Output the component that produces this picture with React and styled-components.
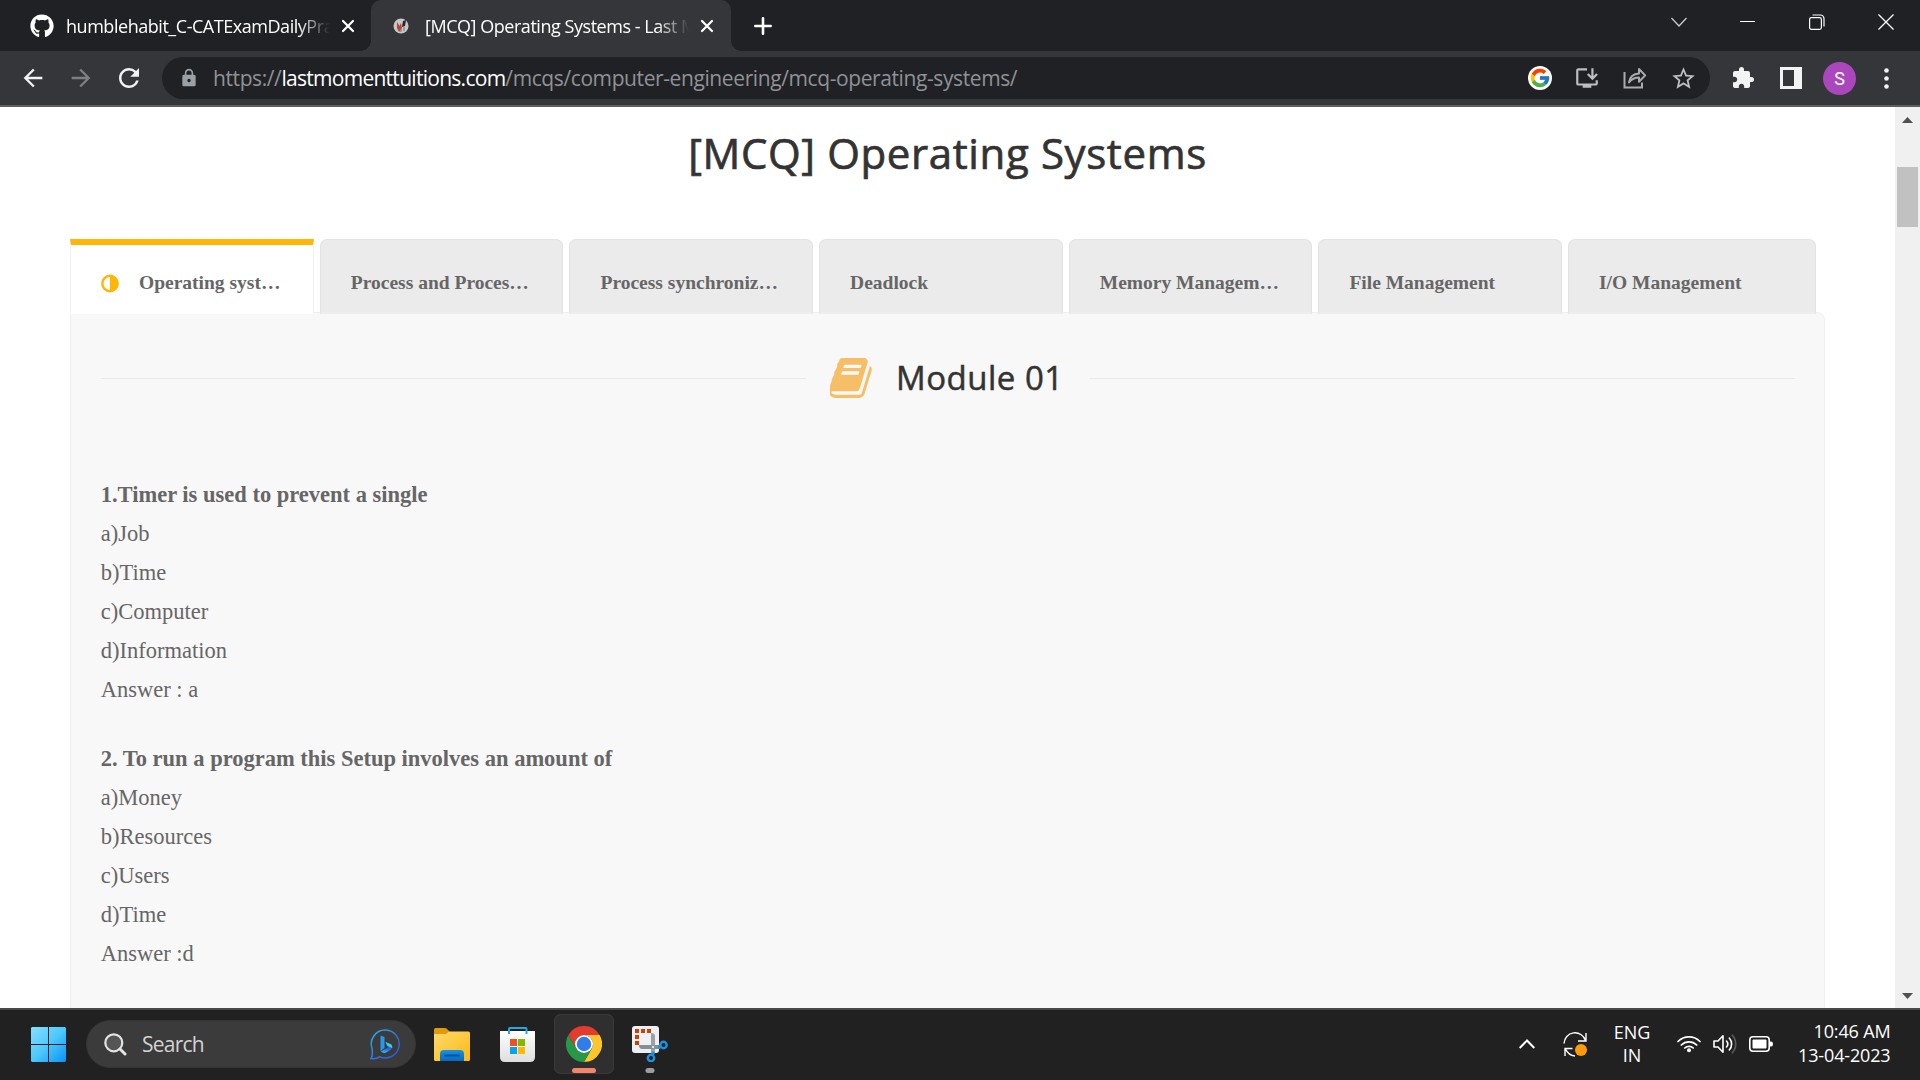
import React from "react";
import styled, { createGlobalStyle, css } from "styled-components";
import { FaGithub } from "react-icons/fa";
import { FcGoogle } from "react-icons/fc";
import { MdExtension, MdLock, MdStarBorder, MdInstallDesktop, MdRefresh, MdArrowBack, MdArrowForward } from "react-icons/md";

const UI = `"Open Sans", "Noto Sans", sans-serif`;
const SERIF = `"Liberation Serif", "Times New Roman", serif`;

const Global = createGlobalStyle`
  * { box-sizing: border-box; }
  html, body { margin: 0; padding: 0; overflow: hidden; }
  svg { display: block; flex: none; }
`;

const Screen = styled.div`
  width: 1920px;
  height: 1080px;
  display: flex;
  flex-direction: column;
  background: #fff;
  overflow: hidden;
`;

/* ---------- browser chrome ---------- */

const TabStrip = styled.header`
  height: 51px;
  flex: none;
  display: flex;
  background: #202124;
  color: #fff;
  font-family: ${UI};
`;

const BrowserTab = styled.div`
  position: relative;
  width: ${(p) => p.$width}px;
  padding-left: ${(p) => p.$pad}px;
  display: flex;
  align-items: center;
  ${(p) =>
    p.$active &&
    css`
      background: #35363a;
      border-radius: 10px 10px 0 0;
      &::before,
      &::after {
        content: "";
        position: absolute;
        bottom: 0;
        width: 10px;
        height: 10px;
      }
      &::before {
        left: -10px;
        background: radial-gradient(circle at 0 0, transparent 9.5px, #35363a 10px);
      }
      &::after {
        right: -10px;
        background: radial-gradient(circle at 100% 0, transparent 9.5px, #35363a 10px);
      }
    `}
`;

const TabTitle = styled.span`
  width: 264px;
  margin: 0 10.5px 0 ${(p) => p.$gap}px;
  font-size: 18px;
  line-height: 24px;
  letter-spacing: -0.46px;
  white-space: nowrap;
  mask-image: linear-gradient(to right, #000 232px, transparent 264px);
`;

const NewTab = styled.div`
  width: 64px;
  display: flex;
  align-items: center;
  justify-content: center;
`;

const WindowControls = styled.div`
  margin-left: auto;
  height: 43px;
  display: flex;
  align-items: center;
  gap: 53px;
  padding-right: 26px;
`;

const Toolbar = styled.div`
  height: 56px;
  flex: none;
  display: flex;
  align-items: center;
  background: #35363a;
  border-bottom: 2px solid #5b5d61;
  color: #f1f3f4;
`;

const NavButtons = styled.div`
  width: 162px;
  display: flex;
  align-items: center;
  padding-left: 19px;
  gap: 19.5px;
`;

const Omnibox = styled.div`
  width: 1548px;
  height: 42px;
  border-radius: 21px;
  background: #202124;
  display: flex;
  align-items: center;
  padding: 0 13px 0 17px;
  color: #9aa0a6;
`;

const Url = styled.span`
  margin-left: 14px;
  font-family: ${UI};
  font-size: 21px;
  line-height: 30px;
  letter-spacing: -0.4px;
  color: #8f9296;
  white-space: nowrap;
`;

const Host = styled.span`
  color: #fff;
  letter-spacing: -0.72px;
`;

const OmniActions = styled.div`
  margin-left: auto;
  display: flex;
  align-items: center;
  gap: 22.8px;
  color: #bdbec1;
`;

const GoogleBadge = styled.span`
  width: 24px;
  height: 24px;
  border-radius: 50%;
  background: #fff;
  display: flex;
  align-items: center;
  justify-content: center;
`;

const ToolbarActions = styled.div`
  flex: 1;
  display: flex;
  align-items: center;
  padding-left: 21px;
`;

const Avatar = styled.span`
  width: 33px;
  height: 33px;
  margin: 0 28px 0 21px;
  border-radius: 50%;
  background: #ab47bc;
  color: #fff;
  display: flex;
  align-items: center;
  justify-content: center;
  font: 400 18px/33px Roboto, sans-serif;
`;

const Side = styled.span`
  margin-left: 25px;
`;

/* ---------- page ---------- */

const Viewport = styled.main`
  height: 901px;
  flex: none;
  display: flex;
  overflow: hidden;
`;

const Page = styled.div`
  width: 1895px;
  padding: 0 70px;
`;

const Title = styled.h1`
  margin: 0;
  height: 132px;
  padding-top: 17px;
  text-align: center;
  font: 400 42px/57px "Open Sans", sans-serif;
  letter-spacing: 0.62px;
  -webkit-text-stroke: 0.7px #333;
  color: #333;
`;

const TabList = styled.nav`
  display: grid;
  grid-template-columns: repeat(6, 243.65px) 248px;
  column-gap: 6px;
  height: 75px;
  position: relative;
  z-index: 1;
`;

const PageTab = styled.div`
  display: flex;
  align-items: center;
  padding: 14px 0 0 30.2px;
  border: 1px solid #e3e3e3;
  border-bottom: 2px solid #ededed;
  border-radius: 7px 7px 0 0;
  background: #ebebeb;
  color: #666;
  font: 700 19.5px/24px ${SERIF};
  white-space: nowrap;
  ${(p) =>
    p.$active &&
    css`
      background: #fff;
      border-color: #f0f0f0;
      border-top: 6px solid #ffb606;
      border-bottom-color: #fff;
      border-radius: 0;
      padding: 9px 0 0 29.5px;
      gap: 20.5px;
    `}
`;

const Panel = styled.section`
  width: 1755px;
  height: 800px;
  margin-top: -2px;
  padding: 0 29px 0 30px;
  background: #f8f8f8;
  border: 1px solid #efefef;
  border-radius: 0 8px 0 0;
`;

const ModuleHeading = styled.div`
  height: 131px;
  display: flex;
  align-items: center;
  color: #333;
`;

const Rule = styled.div`
  width: ${(p) => p.$width}px;
  height: 1px;
  background: #e9e9e9;
`;

const BookSlot = styled.span`
  margin: 0 0 2px 24px;
`;

const ModuleName = styled.h2`
  margin: 0 auto 2px 24px;
  font: 400 33px/45px "Open Sans", sans-serif;
  letter-spacing: 0.5px;
  -webkit-text-stroke: 0.5px #333;
  white-space: nowrap;
`;

const Questions = styled.div`
  padding-top: 31px;
  display: flex;
  flex-direction: column;
  gap: 30px;
`;

const Question = styled.div`
  margin-left: -0.3px;
  color: #666;
  font: 400 22.5px/39px ${SERIF};
`;

const Line = styled.div`
  font-weight: ${(p) => (p.$bold ? 700 : 400)};
  height: 39px;
  white-space: pre;
`;

const Scrollbar = styled.aside`
  width: 25px;
  background: #f0f0f0;
  display: flex;
  flex-direction: column;
  align-items: center;
  padding: 10px 0 9px;
`;

const Thumb = styled.div`
  width: 21px;
  height: 60px;
  margin: 44px 0 auto;
  background: #c1c1c1;
`;

/* ---------- taskbar ---------- */

const Taskbar = styled.footer`
  height: 72px;
  flex: none;
  display: flex;
  align-items: center;
  background: #212121;
  border-top: 2px solid #484848;
  padding: 0 29.5px 2px 31px;
  color: #fff;
  font-family: ${UI};
`;

const SearchBox = styled.div`
  width: 330px;
  height: 48px;
  margin: 0 6px 0 20px;
  padding: 0 15px 0 17px;
  border-radius: 24px;
  background: #3b3b3b;
  border: 1px solid #353535;
  display: flex;
  align-items: center;
  font-size: 21px;
  color: #d2d2d2;
`;

const SearchLabel = styled.span`
  margin-left: 15px;
  margin-right: auto;
  line-height: 28px;
  letter-spacing: -0.75px;
`;

const AppButton = styled.div`
  position: relative;
  width: 60px;
  height: 60px;
  margin-right: ${(p) => p.$gap}px;
  display: flex;
  align-items: center;
  justify-content: center;
  border-radius: 7px;
  ${(p) => p.$active && "background: #2f2f2f; box-shadow: inset 0 0 0 1px #3a3a3a;"}
`;

const Running = styled.span`
  position: absolute;
  bottom: 1px;
  left: 50%;
  transform: translateX(-50%);
  width: ${(p) => (p.$active ? 24 : 9)}px;
  height: 5px;
  border-radius: 3px;
  background: ${(p) => (p.$active ? "#f4846a" : "#9d9d9d")};
`;

const Tray = styled.div`
  margin-left: auto;
  display: flex;
  align-items: center;
`;

const SyncSlot = styled.span`
  margin-left: 28px;
`;

const Language = styled.div`
  width: 50px;
  margin: 0 20px 0 20.5px;
  text-align: center;
  font-size: 18px;
  line-height: 23px;
`;

const TrayGroup = styled.div`
  display: flex;
  align-items: center;
  gap: 12px;
`;

const Clock = styled.div`
  width: 117.5px;
  padding-bottom: 2px;
  text-align: right;
  font-size: 18px;
  line-height: 24px;
  letter-spacing: -0.15px;
`;

const Close = () => (
  <svg width="14" height="14" viewBox="0 0 14 14" stroke="#fff" strokeWidth="2.2" strokeLinecap="round">
    <path d="M2 2l10 10M12 2L2 12" />
  </svg>
);

const Favicon = () => (
  <svg width="16" height="16" viewBox="0 0 16 16">
    <circle cx="8" cy="8" r="7.5" fill="#c9c6c6" />
    <path d="M4 4l2.5 4L8 5l1 5-3 4-2-4z" fill="#b5423f" />
    <path d="M10 3l3-1-1 6-3 1z" fill="#26262a" />
    <path d="M11 9v4M8 11v3" stroke="#77706f" strokeWidth="1" />
  </svg>
);

const ShareIcon = () => (
  <svg width="24" height="22" viewBox="0 0 24 22" fill="none" stroke="#aaabae" strokeWidth="2">
    <path d="M1.5 5v15.500h17.500v-5" />
    <path d="M6 15.500c.8-5.500 4.200-8.700 10-9V2l6.200 6.400-6.200 6.300v-4.200c-4.300 0-7.300 1.500-10 5z" strokeLinejoin="round" />
  </svg>
);

const PanelIcon = () => (
  <svg width="22" height="22" viewBox="0 0 22 22">
    <path fillRule="evenodd" d="M0 0h22v22H0zM3 3v16h11V3z" fill="#f1f3f4" />
  </svg>
);

const Book = () => (
  <svg width="42" height="40" viewBox="64 128 1600 1536" fill="#f7be68">
    <path d="M1639 478q40 57 18 129l-275 906q-19 64-76.500 107.500t-122.500 43.500h-923q-77 0-148.500-53.500t-99.500-131.500q-24-67-2-127 0-4 3-27t4-37q1-8-3-21.500t-3-19.500q2-11 8-21t16.500-23.500 16.500-23.500q23-38 45-91.500t30-91.500q3-10 .5-30t-.5-28q3-11 17-28t17-23q21-36 42-92t25-90q1-9-2.500-32t.5-28q4-13 22-30.500t22-22.500q19-26 42.500-84.500t27.500-96.500q1-8-3-25.500t-2-26.500q2-8 9-18t18-23 17-21q8-12 16.500-30.500t15-35 16-36 19.500-32 26.500-23.500 36-11.500 47.500 5.500l-1 3q38-9 51-9h761q74 0 114 56t18 130l-274 906q-36 119-71.500 153.500t-128.500 34.500h-869q-27 0-38 15-11 16-1 43 24 70 144 70h923q29 0 56-15.500t35-41.500l300-987q7-22 5-57 38 15 59 43zm-1064 2q-4 13 2 22.500t20 9.500h608q13 0 25.500-9.500t16.500-22.500l21-64q4-13-2-22.500t-20-9.500h-608q-13 0-25.500 9.500t-16.500 22.500zm-83 256q-4 13 2 22.500t20 9.500h608q13 0 25.500-9.500t16.500-22.500l21-64q4-13-2-22.500t-20-9.500h-608q-13 0-25.500 9.500t-16.500 22.500z" />
  </svg>
);

const HalfCircle = () => (
  <svg width="18" height="20" viewBox="0 -1.500 18 20">
    <circle cx="9" cy="9" r="7.700" fill="none" stroke="#ffb606" strokeWidth="2.400" />
    <path d="M9 1a8 8 0 010 16z" fill="#ffb606" />
  </svg>
);

const StartIcon = () => (
  <svg width="35" height="35" viewBox="0 0 35 35">
    <defs>
      <linearGradient id="win" x1="0" y1="0" x2="35" y2="35" gradientUnits="userSpaceOnUse">
        <stop offset="0" stopColor="#86e0ff" />
        <stop offset=".5" stopColor="#4cc8fc" />
        <stop offset="1" stopColor="#0a92f8" />
      </linearGradient>
    </defs>
    <path d="M1 0h16v17H0V1zM18 0h16l1 1v16H18zM0 18h17v17H1l-1-1zM18 18h17v16l-1 1H18z" fill="url(#win)" />
  </svg>
);

const SearchIcon = () => (
  <svg width="23" height="23" viewBox="0 0 23 23" fill="none" stroke="#e4e4e4">
    <circle cx="9.800" cy="9.800" r="8.500" strokeWidth="2.200" fill="#555" />
    <path d="M16 16l5 5" strokeWidth="3" strokeLinecap="round" />
  </svg>
);

const BingIcon = () => (
  <svg width="30" height="31" viewBox="0 0 30 31">
    <defs>
      <linearGradient id="ring" x1="0" y1="0" x2="1" y2="1">
        <stop offset="0" stopColor="#25b8e8" />
        <stop offset=".6" stopColor="#2d6fe0" />
        <stop offset="1" stopColor="#2a56cf" />
      </linearGradient>
      <linearGradient id="bing" x1="0" y1="0" x2="0" y2="1">
        <stop offset="0" stopColor="#2ba5f3" />
        <stop offset=".6" stopColor="#2160ec" />
        <stop offset="1" stopColor="#35c3f4" />
      </linearGradient>
    </defs>
    <path d="M15.500 1a14 14 0 11-6 26.800C6.500 29.800 3.500 29.800 1 29.500c1.500-1.800 1.600-4 1.200-9.500A14 14 0 0115.500 1z" fill="none" stroke="url(#ring)" strokeWidth="1.500" />
    <path d="M10.500 6.500l4 1.500v11l-4 3z" fill="#2a96f3" />
    <path d="M10.500 21.500c1 2.300 3.500 3 5.500 2l4.500-2.700c1.800-1.300 2-4.500-.3-5.600L16 13.300l1.500 3.900 1.700.8-8 4z" fill="url(#bing)" />
    <path d="M15.500 13l5 2c1.800.9 2.200 2.800 1.500 4.500-.6-1.500-4-2.200-4.800-2.800z" fill="#38cbed" />
  </svg>
);

const FolderIcon = () => (
  <svg width="36" height="33" viewBox="0 0 36 33">
    <defs>
      <linearGradient id="fold" x1="0" y1="0" x2="1" y2="1">
        <stop offset="0" stopColor="#ffda6b" />
        <stop offset="1" stopColor="#fbb915" />
      </linearGradient>
      <linearGradient id="foldBlue" x1="0" y1="0" x2="0" y2="1">
        <stop offset="0" stopColor="#1793e6" />
        <stop offset="1" stopColor="#0b68bd" />
      </linearGradient>
    </defs>
    <path d="M0 1.500Q0 0 1.500 0h9q1.500 0 2.500 1l3 3v6H0z" fill="#e09a0b" />
    <path d="M0 6h12l3-2.500h19.500Q36 3.500 36 5v26.500q0 1.500-1.500 1.500h-33Q0 33 0 31.500z" fill="url(#fold)" />
    <path d="M6 33v-7q0-4 4-4h16q4 0 4 4v7z" fill="url(#foldBlue)" />
    <path d="M11 27.500h14" stroke="#07509c" strokeWidth="1.800" strokeLinecap="round" />
  </svg>
);

const StoreIcon = () => (
  <svg width="36" height="35" viewBox="0 0 36 35">
    <defs>
      <linearGradient id="bag" x1="0" y1="0" x2="0" y2="1">
        <stop offset="0" stopColor="#fff" />
        <stop offset="1" stopColor="#dedede" />
      </linearGradient>
    </defs>
    <path d="M0 4h35v26q0 5-5 5H5q-5 0-5-5z" fill="url(#bag)" />
    <path d="M9 7V2q0-1 1-1h15.500q1 0 1 1v5" fill="none" stroke="#20a9ea" strokeWidth="2" />
    <path d="M10 12h7v7h-7z" fill="#f25022" />
    <path d="M18 12h7v7h-7z" fill="#7fba00" />
    <path d="M10 20h7v7h-7z" fill="#00a4ef" />
    <path d="M18 20h7v7h-7z" fill="#ffb900" />
  </svg>
);

const ChromeIcon = () => (
  <svg width="36" height="36" viewBox="0 0 36 36">
    <path d="M2.410 9A18 18 0 0133.590 9H18a9 9 0 00-7.794 13.500z" fill="#e33b2e" />
    <path d="M33.590 9A18 18 0 0118 36l7.794-13.500A9 9 0 0018 9z" fill="#ffc62c" />
    <path d="M18 36A18 18 0 012.410 9l7.796 13.500a9 9 0 0015.588 0z" fill="#279847" />
    <circle cx="18" cy="18" r="9" fill="#fff" />
    <circle cx="18" cy="18" r="7.200" fill="#2f7de9" />
  </svg>
);

const SnipIcon = () => (
  <svg width="36" height="36" viewBox="0 0 36 36">
    <rect width="27" height="27" rx="3" fill="#eef1f4" />
    <path d="M3 3h4v4H3zM9 3h4v4H9zM15 3h4v4h-4zM3 9h4v4H3zM3 15h4v4H3z" fill="#d83b01" />
    <path d="M19 7q4 0 4 3v17h-4z" fill="#9aa1a8" />
    <path d="M7 19h21v4H10q-3 0-3-4z" fill="#868e96" />
    <circle cx="21" cy="21" r="1.200" fill="#e4e7ea" />
    <circle cx="31.500" cy="19" r="3.200" fill="none" stroke="#1b93e0" strokeWidth="2.400" />
    <circle cx="19" cy="32" r="3.200" fill="none" stroke="#1b93e0" strokeWidth="2.400" />
    <path d="M26 21.500l3-1M21.500 26l-1 3" stroke="#1b93e0" strokeWidth="3" />
  </svg>
);

const SyncIcon = () => (
  <svg width="24" height="25" viewBox="0 0 24 25" fill="none" stroke="#fff" strokeWidth="1.400">
    <path d="M1 11.500A11 11 0 0122.500 8.500M23 1v8h-8M2 24v-7.500h7.500M2.500 17q3 6.500 9.500 7" />
    <circle cx="18" cy="18" r="6" fill="#ff9a0a" stroke="none" />
  </svg>
);

const WifiIcon = () => (
  <svg width="24" height="18" viewBox="0 0 24 18" fill="none" stroke="#fff" strokeWidth="1.700" strokeLinecap="round">
    <path d="M1 6.500a15.500 15.500 0 0122 0M4.300 10a11 11 0 0115.400 0M7.800 13a6 6 0 018.400 0" />
    <circle cx="12" cy="15.300" r="2" fill="#fff" stroke="none" />
  </svg>
);

const SpeakerIcon = () => (
  <svg width="24" height="20" viewBox="0 0 24 20" fill="none" stroke="#fff" strokeWidth="1.600" strokeLinecap="round" strokeLinejoin="round">
    <path d="M1 7h4l5-5.200v16.400L5 13H1z" />
    <path d="M13.500 7a4.500 4.500 0 010 6M16.300 4a9 9 0 010 12" />
    <path d="M19.300 1.200a13 13 0 010 17.600" stroke="#5c5c5c" />
  </svg>
);

const BatteryIcon = () => (
  <svg width="24" height="16" viewBox="0 0 24 16">
    <rect x=".8" y=".8" width="19.400" height="14.400" rx="3.200" fill="none" stroke="#fff" strokeWidth="1.600" />
    <rect x="3.500" y="3.500" width="14" height="9" rx="1" fill="#fff" />
    <path d="M21 5.500h1.200q1.800 0 1.800 2.500t-1.800 2.500H21z" fill="#fff" />
  </svg>
);

const pageTabs = [
  "Operating syst…",
  "Process and Proces…",
  "Process synchroniz…",
  "Deadlock",
  "Memory Managem…",
  "File Management",
  "I/O Management",
];

const questions = [
  ["1.Timer is used to prevent a single", "a)Job", "b)Time", "c)Computer", "d)Information", "Answer : a"],
  ["2. To run a program this Setup involves an amount of", "a)Money", "b)Resources", "c)Users", "d)Time", "Answer :d"],
];

export default function App() {
  return (
    <Screen>
      <Global />
      <TabStrip>
        <BrowserTab $width={371} $pad={30}>
          <FaGithub size={24} />
          <TabTitle $gap={12}>humblehabit_C-CATExamDailyPra</TabTitle>
          <Close />
        </BrowserTab>
        <BrowserTab $active $width={360} $pad={22}>
          <Favicon />
          <TabTitle $gap={16}>[MCQ] Operating Systems - Last M</TabTitle>
          <Close />
        </BrowserTab>
        <NewTab>
          <svg width="18" height="18" viewBox="0 0 18 18" stroke="#fff" strokeWidth="2.600" strokeLinecap="round">
            <path d="M9 1.300v15.400M1.300 9h15.400" />
          </svg>
        </NewTab>
        <WindowControls>
          <svg width="16" height="16" viewBox="0 0 16 16" fill="none" stroke="#cfcfd0" strokeWidth="1.200">
            <path d="M.5 4l7.500 8 7.500-8" />
          </svg>
          <svg width="16" height="16" viewBox="0 0 16 16">
            <path d="M0 7h15v1H0z" fill="#fff" />
          </svg>
          <svg width="16" height="16" viewBox="0 0 16 16" fill="none" stroke="#fff" strokeWidth="1.200">
            <rect x=".6" y="3.600" width="11.800" height="11.800" rx="1.800" />
            <path d="M3.500 1h7.500q4 0 4 4v7.500" />
          </svg>
          <svg width="16" height="16" viewBox="0 0 16 16" stroke="#fff" strokeWidth="1.300">
            <path d="M.5.5l15 15M15.500.5l-15 15" />
          </svg>
        </WindowControls>
      </TabStrip>

      <Toolbar>
        <NavButtons>
          <MdArrowBack size={28} />
          <MdArrowForward size={28} color="#7d7f83" />
          <MdRefresh size={30} />
        </NavButtons>
        <Omnibox>
          <MdLock size={20} />
          <Url>
            https://<Host>lastmomenttuitions.com</Host>/mcqs/computer-engineering/mcq-operating-systems/
          </Url>
          <OmniActions>
            <GoogleBadge>
              <FcGoogle size={22} />
            </GoogleBadge>
            <MdInstallDesktop size={26} />
            <ShareIcon />
            <MdStarBorder size={27} />
          </OmniActions>
        </Omnibox>
        <ToolbarActions>
          <MdExtension size={24} />
          <Side>
            <PanelIcon />
          </Side>
          <Avatar>S</Avatar>
          <svg width="5" height="21" viewBox="0 0 5 21" fill="#f1f3f4">
            <circle cx="2.500" cy="2.500" r="2.300" />
            <circle cx="2.500" cy="10.500" r="2.300" />
            <circle cx="2.500" cy="18.500" r="2.300" />
          </svg>
        </ToolbarActions>
      </Toolbar>

      <Viewport>
        <Page>
          <Title>[MCQ] Operating Systems</Title>
          <TabList>
            {pageTabs.map((label, i) => (
              <PageTab key={label} $active={i === 0}>
                {i === 0 && <HalfCircle />}
                {label}
              </PageTab>
            ))}
          </TabList>
          <Panel>
            <ModuleHeading>
              <Rule $width={705} />
              <BookSlot>
                <Book />
              </BookSlot>
              <ModuleName>Module 01</ModuleName>
              <Rule $width={706} />
            </ModuleHeading>
            <Questions>
              {questions.map((lines) => (
                <Question key={lines[0]}>
                  {lines.map((text, i) => (
                    <Line key={text} $bold={i === 0}>
                      {text}
                    </Line>
                  ))}
                </Question>
              ))}
            </Questions>
          </Panel>
        </Page>
        <Scrollbar>
          <svg width="11" height="6" viewBox="0 0 11 6">
            <path d="M5.500 0L11 6H0z" fill="#505050" />
          </svg>
          <Thumb />
          <svg width="11" height="6" viewBox="0 0 11 6">
            <path d="M0 0h11L5.500 6z" fill="#505050" />
          </svg>
        </Scrollbar>
      </Viewport>

      <Taskbar>
        <StartIcon />
        <SearchBox>
          <SearchIcon />
          <SearchLabel>Search</SearchLabel>
          <BingIcon />
        </SearchBox>
        <AppButton $gap={6}>
          <FolderIcon />
        </AppButton>
        <AppButton $gap={6}>
          <StoreIcon />
        </AppButton>
        <AppButton $active $gap={6}>
          <ChromeIcon />
          <Running $active />
        </AppButton>
        <AppButton $gap={0}>
          <SnipIcon />
          <Running />
        </AppButton>
        <Tray>
          <svg width="16" height="10" viewBox="0 0 16 10" fill="none" stroke="#fff" strokeWidth="2">
            <path d="M.7 9L8 1.500 15.300 9" />
          </svg>
          <SyncSlot>
            <SyncIcon />
          </SyncSlot>
          <Language>
            ENG
            <br />
            IN
          </Language>
          <TrayGroup>
            <WifiIcon />
            <SpeakerIcon />
            <BatteryIcon />
          </TrayGroup>
          <Clock>
            10:46 AM
            <br />
            13-04-2023
          </Clock>
        </Tray>
      </Taskbar>
    </Screen>
  );
}
